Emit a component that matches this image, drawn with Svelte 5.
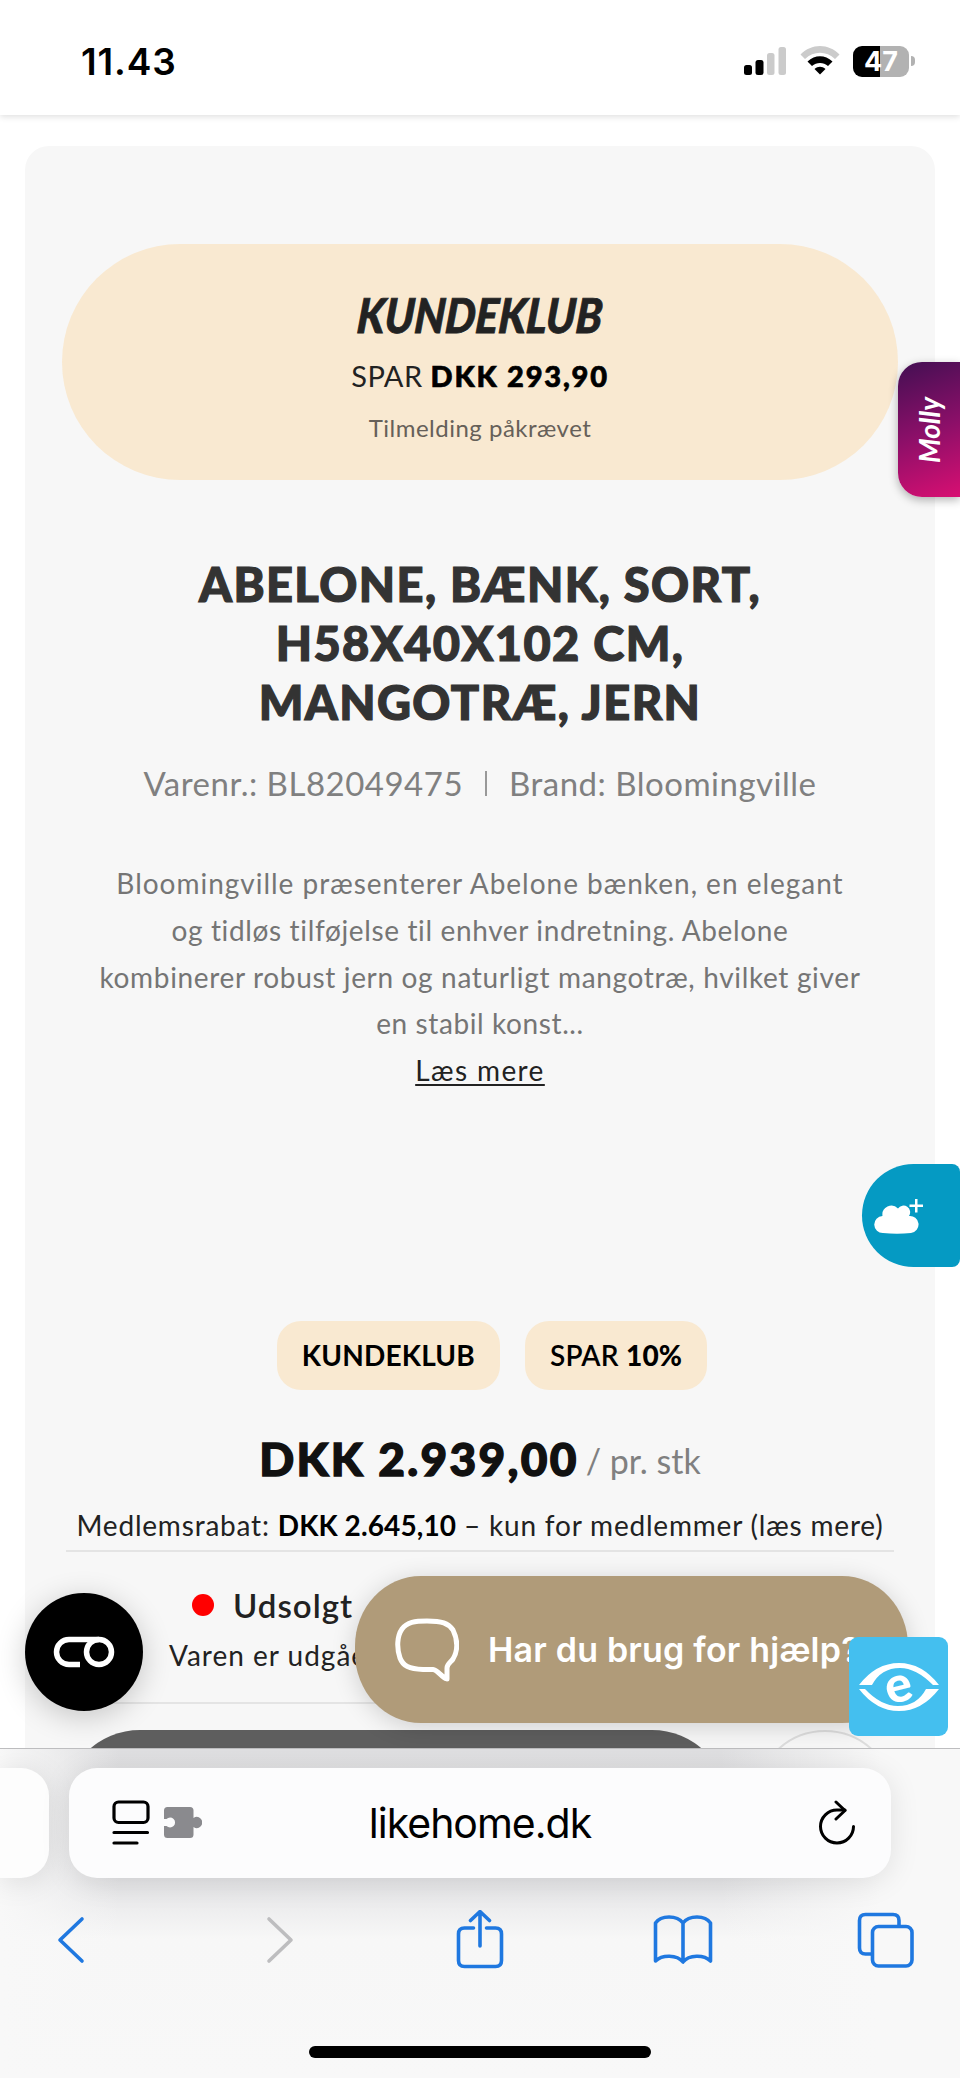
<script>
  const product = {
    title: ['ABELONE, BÆNK, SORT,', 'H58X40X102 CM,', 'MANGOTRÆ, JERN'],
    sku: 'BL82049475',
    brand: 'Bloomingville',
    description: [
      { text: 'Bloomingville præsenterer Abelone bænken, en elegant', tracking: 0.98 },
      { text: 'og tidløs tilføjelse til enhver indretning. Abelone', tracking: 0.64 },
      { text: 'kombinerer robust jern og naturligt mangotræ, hvilket giver', tracking: 0.66 },
      { text: 'en stabil konst...', tracking: 0.6 }
    ],
    price: 'DKK 2.939,00',
    memberPrice: 'DKK 2.645,10',
    saving: 'DKK 293,90'
  };
</script>

<div class="screen">
  <header class="status-bar">
    <span class="time">11.43</span>
    <div class="status-icons">
      <svg width="44" height="32" viewBox="0 0 44 32">
        <rect x="1" y="20" width="8" height="10" rx="2.5" />
        <rect x="12.500" y="15" width="8" height="15" rx="2.5" />
        <rect class="dim" x="24" y="8" width="7.500" height="22" rx="2.5" />
        <rect class="dim" x="35.500" y="2" width="7.500" height="28" rx="2.5" />
      </svg>
      <svg width="40" height="32" viewBox="0 0 40 32">
        <path class="dim" d="M0.500 9.500C11.500 -2 28.500 -2 39.500 9.500L35 14C26.500 5.500 13.500 5.500 5 14Z" />
        <path d="M7.500 16.500C15 9.500 25 9.500 32.500 16.500L28 21C23.500 17 16.500 17 12 21Z" />
        <path d="M14.500 24C18 21 22 21 25.500 24L20 29.500Z" />
      </svg>
      <div class="battery">47</div>
      <i class="battery-tip"></i>
    </div>
  </header>

  <main>
    <article class="card">
      <section class="club">
        <strong class="club-name">KUNDEKLUB</strong>
        <p class="club-save">SPAR <b>{product.saving}</b></p>
        <p class="club-note">Tilmelding påkrævet</p>
      </section>

      <h1>
        {#each product.title as line}
          {line}<br />
        {/each}
      </h1>

      <p class="meta">
        <span>Varenr.: {product.sku}</span>
        <i></i>
        <span>Brand: {product.brand}</span>
      </p>

      <p class="description">
        {#each product.description as line}
          <span style:letter-spacing="{line.tracking}px">{line.text}</span><br />
        {/each}
        <a href="#more">Læs mere</a>
      </p>

      <div class="tags">
        <span class="tag bold">KUNDEKLUB</span>
        <span class="tag">SPAR <b>10%</b></span>
      </div>

      <p class="price"><strong>{product.price}</strong><span>/ pr. stk</span></p>
      <p class="member">Medlemsrabat: <b>{product.memberPrice}</b> – kun for medlemmer (læs mere)</p>

      <div class="stock">
        <p class="stock-state"><i></i>Udsolgt</p>
        <p class="stock-text">Varen er udgået</p>
      </div>

      <div class="actions">
        <button class="buy" aria-label="Køb"></button>
        <button class="wish" aria-label="Ønskeliste"></button>
      </div>
    </article>
  </main>

  <footer class="browser">
    <div class="address-row">
      <div class="prev-tab"></div>
      <div class="address">
        <svg width="90" height="46" viewBox="0 0 90 46">
          <g fill="none" stroke="#000" stroke-width="3.200" stroke-linecap="round">
            <rect x="2" y="2" width="34" height="20.500" rx="4.500" />
            <path d="M2 32.500H35.500M2 43H25" />
          </g>
          <path fill="#8a8a8e" d="M55.500 7H78q3.500 0 3.500 3.500V18a5.500 5.500 0 1 1 0 9V34.500q0 3.500-3.500 3.500H55.500q-3.500 0-3.500-3.500V26h2.500a5 5 0 1 0 0-7H52V10.500Q52 7 55.500 7Z" />
        </svg>
        <span class="host">likehome.dk</span>
        <svg width="38" height="46" viewBox="0 0 38 46" fill="none" stroke="#000" stroke-width="3" stroke-linecap="round" stroke-linejoin="round">
          <path d="M35.500 26.500A16.500 16.500 0 1 1 19 10H27" />
          <path d="M18 2L27 10.500L18 19" />
        </svg>
      </div>
    </div>

    <nav class="tools">
      <svg width="60" height="60" viewBox="0 0 60 60"><path d="M40 9L18 30L40 51" /></svg>
      <svg class="off" width="60" height="60" viewBox="0 0 60 60"><path d="M23 9L45 30L23 51" /></svg>
      <svg width="60" height="60" viewBox="0 0 60 60">
        <path d="M24.500 18H15.500q-6 0-6 6V50.500q0 6 6 6H46.500q6 0 6-6V24q0-6-6-6H37.500M31 36V2M21.500 10.500L31 1.500L40.500 10.500" />
      </svg>
      <svg width="60" height="60" viewBox="0 0 60 60">
        <path d="M30 13C24 5 8 5 2.500 13V51C9 44.500 24 44.500 30 52C36 44.500 51 44.500 57.500 51V13C52 5 36 5 30 13ZM30 13V52" />
      </svg>
      <svg width="60" height="60" viewBox="0 0 60 60">
        <path d="M15.500 44H9.500q-6 0-6-6V10.500q0-6 6-6H37q6 0 6 6V16" />
        <rect x="16.500" y="16.500" width="39.500" height="39.500" rx="6" />
      </svg>
    </nav>
    <div class="home-bar"></div>
  </footer>

  <!-- widgets floating above the page -->
  <aside class="molly"><span>Molly</span></aside>

  <aside class="cloud">
    <svg width="50" height="36" viewBox="0 0 50 36" fill="#fff">
      <path d="M9 35a8.500 8.500 0 0 1-.5-17A9 9 0 0 1 24 10.500A6 6 0 0 1 35 18a8.500 8.500 0 0 1 2 17Q23 36.500 9 35Z" />
      <path d="M41 1h2.500v5.500H49v2.500H43.500v5.500H41V9h-5.500V6.500H41Z" />
    </svg>
  </aside>

  <aside class="cookie">
    <svg width="62" height="32" viewBox="0 0 62 32" fill="none" stroke="#fff" stroke-width="5.500">
      <path d="M27 28.500H16a12.500 12.500 0 0 1 0-25H46" />
      <circle cx="46" cy="16" r="12.500" />
    </svg>
  </aside>

  <aside class="chat">
    <svg width="64" height="64" viewBox="0 0 64 64" fill="none" stroke="#fff" stroke-width="5" stroke-linejoin="round">
      <path d="M32 3C47 3 53 5 58 12C63 22 63 33 58 41C56 44 52 46 52 50V61C46 59 43 52 38 51.500H28C14 51 8 48 5 40C1.500 30 2 18 7 11C12 4 20 3 32 3Z" />
    </svg>
    <span>Har du brug for hjælp?</span>
  </aside>

  <aside class="eye">
    <svg width="80" height="50" viewBox="0 0 80 50" fill="#fff">
      <path d="M0 23Q17 1 40 1Q63 1 80 23H74Q57 6 41 6Q22 6 13 23Z" />
      <path d="M0 27Q17 49 40 49Q63 49 80 27H67Q58 44 39 44Q22 44 6 27Z" />
    </svg>
    <span>e</span>
  </aside>
</div>

<style>
  :global(body) {
    margin: 0;
    background: #fff;
  }

  .screen {
    position: relative;
    display: flex;
    flex-direction: column;
    width: 960px;
    height: 2078px;
    overflow: hidden;
    background: #fff;
    color: #222;
    font-family: Lato, "Open Sans", sans-serif;
    white-space: nowrap;
  }

  p,
  h1 {
    margin: 0;
  }

  button {
    padding: 0;
    border: 0;
  }

  /* status bar */
  .status-bar {
    display: flex;
    justify-content: space-between;
    align-items: center;
    flex: none;
    box-sizing: border-box;
    height: 115px;
    padding: 7px 45px 0 81px;
    background: #fff;
    box-shadow: 0 2px 6px rgba(0, 0, 0, 0.12);
  }

  .time {
    font: 600 37px Inter, sans-serif;
    letter-spacing: 0.9px;
    color: #000;
  }

  .status-icons {
    display: flex;
    align-items: center;
  }

  .status-icons svg + svg {
    margin: 0 13px;
  }

  .dim {
    fill: #cbcbcb;
  }

  .battery {
    width: 56px;
    height: 31px;
    border-radius: 9px;
    background: linear-gradient(90deg, #000 48%, #b2b2b2 48%);
    color: #fff;
    font: 700 27px/31px Inter, sans-serif;
    text-align: center;
  }

  .battery-tip {
    width: 4px;
    height: 10px;
    margin-left: 2px;
    border-radius: 0 4px 4px 0;
    background: #b2b2b2;
  }

  /* product card */
  main {
    flex: 1;
    padding: 31px 25px 0;
    overflow: hidden;
  }

  .card {
    box-sizing: border-box;
    height: 1700px;
    padding: 98px 37px 0;
    border-radius: 24px;
    background: #f7f7f7;
    text-align: center;
  }

  .club {
    box-sizing: border-box;
    height: 236px;
    padding-top: 34px;
    border-radius: 118px;
    background: #f9e9d1;
  }

  .club-name {
    display: block;
    font-size: 48px;
    font-weight: 900;
    font-style: italic;
    line-height: 74px;
    transform: scaleX(0.89) skewX(-5deg);
    -webkit-text-stroke: 0.8px #222;
  }

  .club-save {
    font-size: 29px;
    letter-spacing: 0.5px;
    line-height: 48px;
  }

  .club-save b {
    font-weight: 900;
    letter-spacing: 1.8px;
    -webkit-text-stroke: 0.7px #000;
    color: #000;
  }

  .club-note {
    font-size: 24px;
    letter-spacing: 0.5px;
    line-height: 56px;
    color: #666059;
  }

  h1 {
    margin-top: 75px;
    font-size: 47px;
    font-weight: 900;
    letter-spacing: 1.4px;
    line-height: 59px;
    color: #333;
    -webkit-text-stroke: 1.2px #333;
  }

  .meta {
    display: flex;
    justify-content: center;
    align-items: center;
    margin-top: 21px;
    font-size: 33px;
    letter-spacing: 0.5px;
    line-height: 60px;
    color: #808080;
  }

  .meta i {
    width: 2px;
    height: 25px;
    margin: 0 22px;
    background: #999;
  }

  .description {
    margin-top: 47px;
    font-size: 28px;
    line-height: 46.8px;
    color: #757575;
  }

  .description a {
    color: #222;
    letter-spacing: 1.4px;
    text-decoration-thickness: 2px;
    text-underline-offset: 3px;
  }

  .tags {
    display: flex;
    justify-content: center;
    gap: 25px;
    margin: 227.5px 0 0 24px;
  }

  .tag {
    height: 69px;
    padding: 0 25px;
    border-radius: 24px;
    background: #f9e9d1;
    font-size: 28px;
    font-weight: 600;
    letter-spacing: 0.2px;
    line-height: 69px;
    color: #000;
  }

  .bold {
    font-weight: 700;
  }

  .price {
    display: flex;
    justify-content: center;
    align-items: baseline;
    gap: 7px;
    height: 60px;
    margin-top: 39px;
    line-height: 60px;
    font-size: 34px;
    color: #808080;
  }

  .price strong {
    font-size: 46px;
    font-weight: 900;
    letter-spacing: 2.3px;
    color: #111;
    -webkit-text-stroke: 1.4px #111;
  }

  /* the unit sits slightly above the price's baseline */
  .price span {
    margin-bottom: 2px;
    transform: translateY(-2px);
  }

  .member {
    height: 48px;
    margin: 13px 4px 0;
    border-bottom: 2px solid #e4e4e4;
    font-size: 28px;
    letter-spacing: 0.8px;
    line-height: 47px;
  }

  .member b {
    letter-spacing: 0.1px;
    color: #000;
  }

  .stock {
    box-sizing: border-box;
    height: 152px;
    margin: 0 4px;
    padding: 30px 0 0 103px;
    border-bottom: 2px solid #e4e4e4;
    text-align: left;
  }

  .stock-state {
    display: flex;
    align-items: center;
    gap: 19px;
    padding-left: 23px;
    font-size: 33px;
    font-weight: 600;
    letter-spacing: 1px;
    line-height: 46px;
  }

  .stock-state i {
    width: 22px;
    height: 22px;
    border-radius: 50%;
    background: #f00;
  }

  .stock-text {
    margin-top: 3px;
    font-size: 28px;
    letter-spacing: 1px;
    line-height: 48px;
  }

  .actions {
    display: flex;
    gap: 27px;
    padding: 26px 2px 0;
  }

  .buy {
    width: 664px;
    height: 152px;
    border-radius: 76px;
    background: #5e5e5e;
  }

  .wish {
    width: 140px;
    height: 140px;
    border: 2px solid #ddd;
    border-radius: 50%;
    background: #f7f7f7;
  }

  /* browser chrome */
  .browser {
    position: relative;
    display: flex;
    flex-direction: column;
    align-items: center;
    box-sizing: border-box;
    height: 330px;
    flex: none;
    border-top: 1px solid #bdbdbf;
    background: linear-gradient(90deg, #f8f8f8 0, transparent 120px, transparent 720px, #f8f8f8 880px), linear-gradient(#dfdfe1 0, #e4e4e6 130px, #f7f7f7 190px, #f8f8f8);
  }

  .address-row {
    display: flex;
    gap: 20px;
    align-self: stretch;
    margin-top: 19px;
  }

  .prev-tab {
    width: 49px;
    height: 110px;
    border-radius: 0 28px 28px 0;
    background: #fdfdfd;
    box-shadow: 0 4px 30px rgba(0, 0, 0, 0.1);
  }

  .address {
    display: flex;
    justify-content: space-between;
    align-items: center;
    box-sizing: border-box;
    width: 822px;
    height: 110px;
    padding: 0 35px 0 43px;
    border-radius: 28px;
    background: #fcfcfd;
    box-shadow: 0 4px 30px rgba(0, 0, 0, 0.1);
  }

  .host {
    margin-left: -60px;
    font: 400 41px Inter, sans-serif;
    letter-spacing: -1px;
    color: #000;
  }

  .tools {
    display: flex;
    justify-content: space-between;
    width: 874px;
    margin-top: 32px;
    padding-right: 2px;
  }

  .tools svg {
    fill: none;
    stroke: #1f78e0;
    stroke-width: 3.6;
    stroke-linecap: round;
    stroke-linejoin: round;
  }

  .tools .off {
    stroke: #bdbdbf;
  }

  .home-bar {
    width: 342px;
    height: 12px;
    margin-top: 76px;
    border-radius: 6px;
    background: #000;
  }

  /* floating widgets */
  .molly {
    position: absolute;
    right: 0;
    top: 362px;
    display: flex;
    align-items: center;
    justify-content: center;
    width: 62px;
    height: 135px;
    border-radius: 24px 0 0 24px;
    background: linear-gradient(160deg, #4a0f55 5%, #8a0f68 50%, #d80f72);
    box-shadow: 0 3px 10px rgba(0, 0, 0, 0.3);
    color: #fff;
  }

  .molly span {
    transform: rotate(-90deg);
    font-size: 28px;
    font-style: italic;
    font-weight: 700;
  }

  .cloud {
    position: absolute;
    right: 0;
    top: 1164px;
    width: 98px;
    height: 103px;
    border-radius: 52px 8px 8px 52px;
    background: #059ac3;
  }

  .cloud svg {
    display: block;
    margin: 34px 0 0 12px;
  }

  .cookie {
    position: absolute;
    left: 25px;
    top: 1593px;
    display: flex;
    align-items: center;
    justify-content: center;
    width: 118px;
    height: 118px;
    border-radius: 50%;
    background: #000;
    box-shadow: 0 6px 30px rgba(0, 0, 0, 0.2);
  }

  .chat {
    position: absolute;
    left: 355px;
    top: 1576px;
    display: flex;
    align-items: center;
    gap: 29px;
    box-sizing: border-box;
    width: 553px;
    height: 147px;
    padding-left: 40px;
    border-radius: 66px / 70px;
    background: #b09b79;
    box-shadow: 0 4px 24px rgba(0, 0, 0, 0.16);
    color: #fff;
    font: 600 34px Inter, sans-serif;
    letter-spacing: 0.2px;
  }

  .eye {
    position: absolute;
    left: 849px;
    top: 1637px;
    display: grid;
    place-items: center;
    width: 99px;
    height: 99px;
    border-radius: 9px;
    background: #44bfef;
    color: #fff;
  }

  .eye svg,
  .eye span {
    grid-area: 1 / 1;
  }

  .eye span {
    padding-bottom: 8px;
    font-size: 50px;
    font-weight: 900;
    line-height: 60px;
    transform: rotate(-14deg);
  }
</style>
